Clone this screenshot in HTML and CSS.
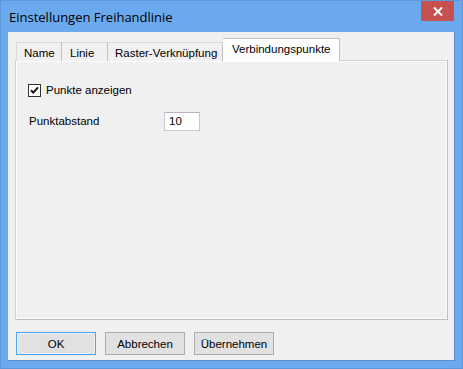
FILE: index.html
```html
<!DOCTYPE html>
<html>
<head>
<meta charset="utf-8">
<link rel="stylesheet" href="styles.css">
</head>
<body>
<div class="window">
  <div class="titlebar">
    <div class="title">Einstellungen Freihandlinie</div>
    <div class="close">
      <svg width="10" height="9" viewBox="0 0 10 9"><path d="M1 0.5 L9 8.5 M9 0.5 L1 8.5" stroke="#fff" stroke-width="2" fill="none"/></svg>
    </div>
  </div>
  <div class="client">
    <div class="tabs">
      <div class="tab tab-name">Name</div>
      <div class="tab tab-linie">Linie</div>
      <div class="tab tab-raster">Raster-Verknüpfung</div>
      <div class="tab tab-active">Verbindungspunkte</div>
    </div>
    <div class="panel">
      <label class="check-row">
        <span class="checkbox">
          <svg width="11" height="11" viewBox="0 0 11 11"><path d="M2 5.2 L4.3 7.6 L9 2.4" stroke="#111" stroke-width="2" fill="none"/></svg>
        </span>
        <span>Punkte anzeigen</span>
      </label>
      <div class="field-row">
        <span class="field-label">Punktabstand</span>
        <div class="input">10</div>
      </div>
    </div>
    <div class="buttons">
      <div class="btn btn-default">OK</div>
      <div class="btn">Abbrechen</div>
      <div class="btn">Übernehmen</div>
    </div>
  </div>
</div>
</body>
</html>
```

FILE: styles.css
```css
html, body {
  margin: 0;
  padding: 0;
}
body {
  width: 463px;
  height: 369px;
  overflow: hidden;
  font-family: "Liberation Sans", Arial, sans-serif;
  font-size: 11.5px;
  color: #000;
}
.window {
  box-sizing: border-box;
  width: 463px;
  height: 369px;
  background: #6ba9ee;
  border: 1px solid #5e97da;
  display: flex;
  flex-direction: column;
}
.titlebar {
  height: 31px;
  display: flex;
  justify-content: space-between;
  align-items: flex-start;
}
.title {
  font-family: "Open Sans", "Noto Sans", sans-serif;
  font-size: 13px;
  color: #000;
  margin: 7px 0 0 8px;
  line-height: 18px;
}
.close {
  width: 33px;
  height: 20px;
  background: #c75050;
  margin-right: 8px;
  display: flex;
  align-items: center;
  justify-content: center;
}
.client {
  box-sizing: border-box;
  margin: 0 7px 7px 7px;
  flex: 1;
  background: #f0f0f0;
  border-right: 1px solid #5e8fc8;
  border-bottom: 1px solid #5e8fc8;
  padding: 6px 6px 0 7px;
  display: flex;
  flex-direction: column;
}
.tabs {
  display: flex;
  align-items: flex-end;
  height: 23px;
  margin-bottom: -1px;
  padding-left: 1px;
  position: relative;
  z-index: 1;
}
.tab {
  box-sizing: border-box;
  height: 19px;
  border: 1px solid #d9d9d9;
  border-bottom: none;
  border-right-color: #c0c0c0;
  background: #f0f0f0;
  padding: 4px 0 0 7px;
  line-height: 13px;
  white-space: nowrap;
}
.tab + .tab {
  border-left: none;
}
.tab-name { width: 46px; }
.tab-linie { width: 46px; padding-left: 8px; }
.tab-raster { width: 115px; }
.tab-active {
  width: 117px;
  height: 23px;
  background: #fff;
  border: 1px solid #c0c0c0;
  border-bottom: none;
  padding: 4px 0 0 9px;
}
.panel {
  box-sizing: border-box;
  height: 260px;
  background: #f0f0f0;
  border: 1px solid;
  border-color: #d0d0d0 #bdbdbd #bdbdbd #d0d0d0;
  box-shadow: inset -1px -1px #fcfcfc, inset 1px 1px #fcfcfc;
  padding: 22px 0 0 12px;
}
.check-row {
  display: flex;
  align-items: center;
  height: 14px;
}
.checkbox {
  box-sizing: border-box;
  width: 13px;
  height: 13px;
  border: 1px solid #333;
  background: #fff;
  display: flex;
  align-items: center;
  justify-content: center;
  margin-right: 5px;
}
.field-row {
  display: flex;
  align-items: center;
  margin-top: 15px;
  padding-left: 1px;
}
.field-label {
  width: 135px;
  margin-top: -1px;
}
.input {
  box-sizing: border-box;
  width: 36px;
  height: 19px;
  border: 1px solid #c9cacd;
  border-top-color: #b5b6ba;
  background: #fff;
  padding: 2px 0 0 4px;
  line-height: 13px;
}
.buttons {
  display: flex;
  gap: 9px;
  margin-top: 12px;
  padding-left: 1px;
}
.btn {
  box-sizing: border-box;
  width: 80px;
  height: 23px;
  border: 1px solid #adadad;
  background: #e1e1e1;
  display: flex;
  align-items: center;
  justify-content: center;
}
.btn-default {
  border-color: #4ea2f2;
  box-shadow: inset 0 0 0 1px #e9f1fa;
}
```
